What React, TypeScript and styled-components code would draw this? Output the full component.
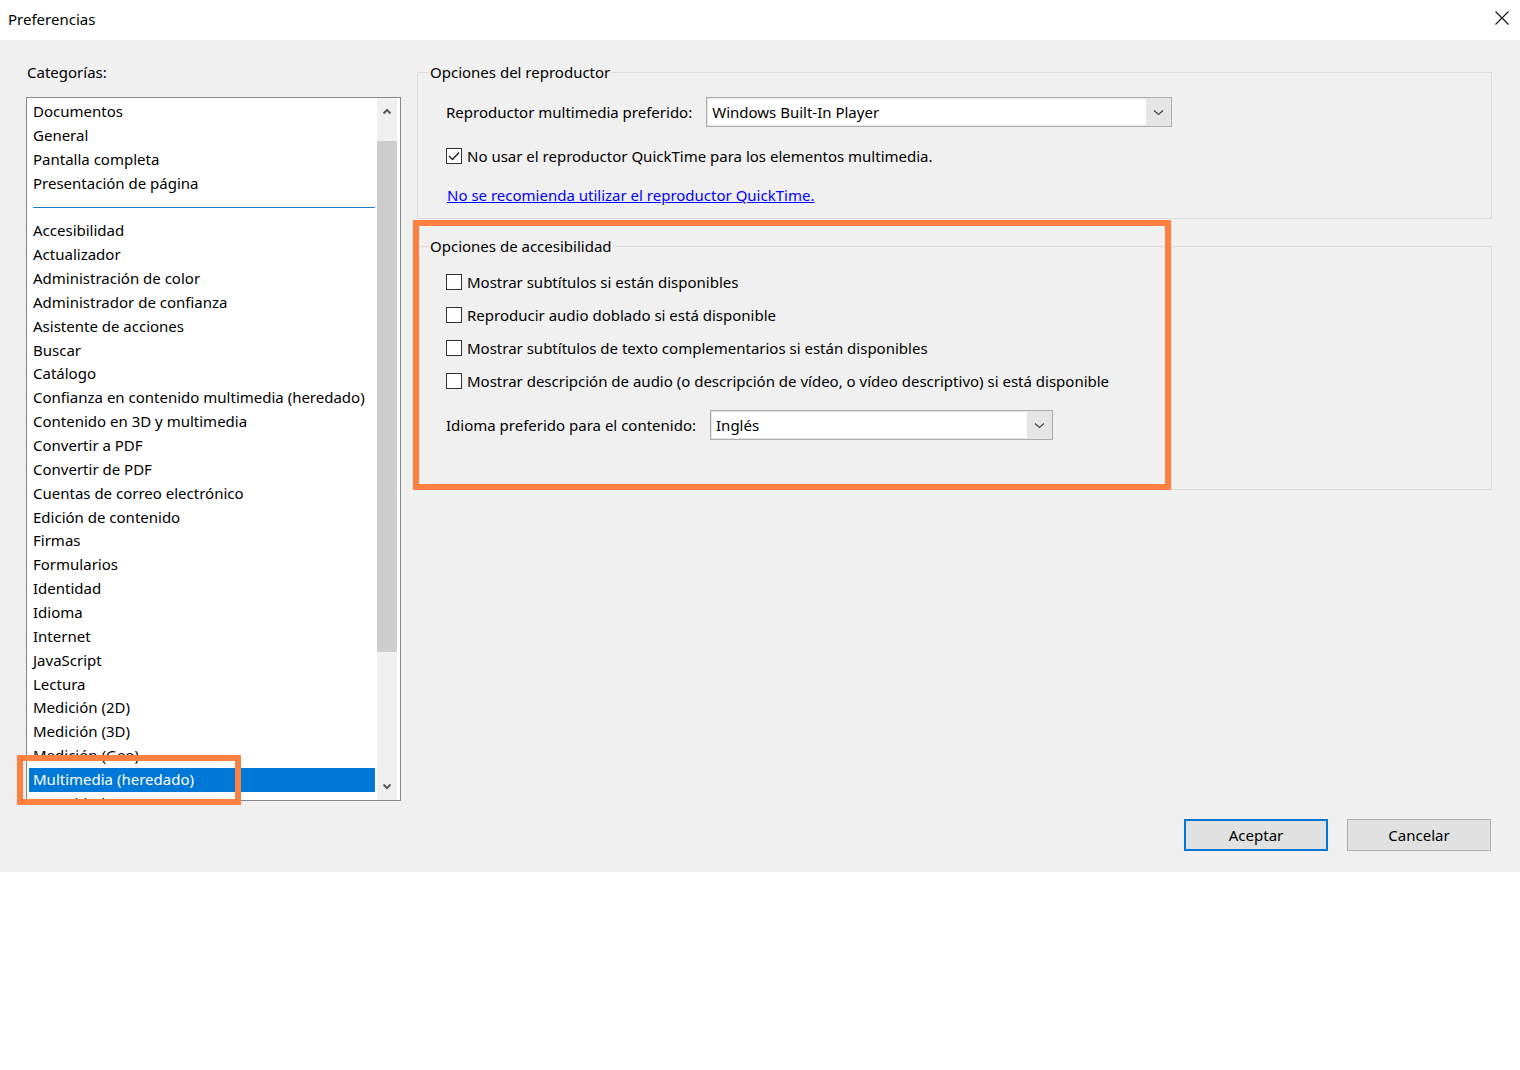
import React from 'react';
import styled, { createGlobalStyle } from 'styled-components';

const GlobalStyle = createGlobalStyle`
  html, body {
    margin: 0;
    padding: 0;
    background: #ffffff;
  }
  body {
    font-family: "Noto Sans", "Open Sans", sans-serif;
    font-size: 15px;
    color: #000000;
  }
`;

const ROW = 23.87;

const Window = styled.div`
  width: 1520px;
`;

const TitleBar = styled.div`
  height: 40px;
  box-sizing: border-box;
  padding: 0 11px 2px 8px;
  display: flex;
  align-items: center;
  justify-content: space-between;
  background: #ffffff;
`;

const Title = styled.span`
  line-height: 20px;
`;

const CloseButton = styled.button`
  border: 0;
  padding: 0;
  background: transparent;
  display: flex;
  margin-top: -2px;
`;

const Body = styled.div`
  height: 832px;
  box-sizing: border-box;
  padding: 22px 28px 21px 26px;
  background: #f0f0f0;
  display: flex;
  flex-direction: column;
`;

const Main = styled.div`
  display: grid;
  grid-template-columns: 375px 1fr;
  column-gap: 16px;
  align-items: start;
`;

const LeftCol = styled.div`
  display: flex;
  flex-direction: column;
`;

const CategoryLabel = styled.div`
  line-height: 20px;
  padding-left: 1px;
  margin-bottom: 15px;
`;

const ListFrame = styled.div`
  position: relative;
  height: 704px;
  box-sizing: border-box;
  border: 1px solid #828790;
  background: #ffffff;
  display: flex;
`;

const ItemsArea = styled.div`
  flex: 1;
  overflow: hidden;
  padding: 2px 2px 0 2px;
`;

const Item = styled.div<{ $selected?: boolean }>`
  height: ${ROW}px;
  line-height: ${ROW}px;
  padding-left: 4px;
  white-space: nowrap;
  background: ${(p) => (p.$selected ? '#0078d7' : 'transparent')};
  color: ${(p) => (p.$selected ? '#ffffff' : '#000000')};
`;

const Separator = styled.div`
  height: ${ROW}px;
  display: flex;
  align-items: center;
  padding-left: 4px;

  &::after {
    content: '';
    flex: 1;
    height: 1px;
    background: #1e7bd0;
  }
`;

const Scrollbar = styled.div`
  width: 20px;
  margin-right: 3px;
  background: #f0f0f0;
  display: flex;
  flex-direction: column;
`;

const ScrollArrow = styled.div<{ $h: number }>`
  height: ${(p) => p.$h}px;
  display: flex;
  align-items: center;
  justify-content: center;
`;

const ScrollTrack = styled.div<{ $offset: number }>`
  flex: 1;
  padding-top: ${(p) => p.$offset}px;
`;

const ScrollThumb = styled.div<{ $h: number }>`
  height: ${(p) => p.$h}px;
  background: #cdcdcd;
`;

const Annotation = styled.div<{ $l: number; $t: number; $w: number; $h: number }>`
  position: absolute;
  left: ${(p) => p.$l}px;
  top: ${(p) => p.$t}px;
  width: ${(p) => p.$w}px;
  height: ${(p) => p.$h}px;
  box-sizing: border-box;
  border: 6px solid #ff8040;
  pointer-events: none;
`;

const RightCol = styled.div`
  position: relative;
  display: flex;
  flex-direction: column;
  gap: 17px;
`;

const GroupBox = styled.fieldset<{ $pb: number }>`
  margin: 0;
  min-width: 0;
  padding: 0 0 ${(p) => p.$pb}px 11px;
  border: 1px solid #dcdcdc;
`;

const Legend = styled.legend`
  padding: 0 1px;
  line-height: 20px;
`;

const Content = styled.div`
  padding-left: 17px;
  display: flex;
  flex-direction: column;
`;

const FieldRow = styled.div<{ $mt: number }>`
  display: flex;
  align-items: center;
  gap: 14px;
  margin-top: ${(p) => p.$mt}px;
`;

const FieldLabel = styled.span`
  white-space: nowrap;
`;

const Select = styled.div<{ $w: number }>`
  width: ${(p) => p.$w}px;
  height: 30px;
  box-sizing: border-box;
  border: 1px solid #adadad;
  padding: 1px;
  background: #e5e5e5;
  display: flex;
`;

const SelectValue = styled.div`
  flex: 1;
  background: #ffffff;
  padding-left: 4px;
  line-height: 26px;
  white-space: nowrap;
`;

const SelectButton = styled.div`
  width: 24px;
  display: flex;
  align-items: center;
  justify-content: center;
`;

const CheckRow = styled.label<{ $mt: number }>`
  display: flex;
  align-items: center;
  height: 20px;
  margin-top: ${(p) => p.$mt}px;
  white-space: nowrap;
`;

const Box = styled.span`
  width: 16px;
  height: 16px;
  box-sizing: border-box;
  border: 1px solid #333333;
  background: #ffffff;
  margin-right: 5px;
  display: flex;
  align-items: center;
  justify-content: center;
`;

const LinkRow = styled.div`
  margin-top: 19px;
  line-height: 20px;
  padding-left: 1px;
`;

const Link = styled.a`
  color: #0000ff;
  text-decoration: underline;
  cursor: pointer;
`;

const Footer = styled.div`
  margin-top: 18px;
  display: flex;
  justify-content: flex-end;
  gap: 19px;
  padding-right: 1px;
`;

const Button = styled.button<{ $primary?: boolean }>`
  width: 144px;
  height: 32px;
  box-sizing: border-box;
  background: #e1e1e1;
  border: ${(p) => (p.$primary ? '2px solid #0078d7' : '1px solid #adadad')};
  font: inherit;
  color: #000000;
  padding: 0;
`;

const categories = [
  'Documentos',
  'General',
  'Pantalla completa',
  'Presentación de página',
  '-',
  'Accesibilidad',
  'Actualizador',
  'Administración de color',
  'Administrador de confianza',
  'Asistente de acciones',
  'Buscar',
  'Catálogo',
  'Confianza en contenido multimedia (heredado)',
  'Contenido en 3D y multimedia',
  'Convertir a PDF',
  'Convertir de PDF',
  'Cuentas de correo electrónico',
  'Edición de contenido',
  'Firmas',
  'Formularios',
  'Identidad',
  'Idioma',
  'Internet',
  'JavaScript',
  'Lectura',
  'Medición (2D)',
  'Medición (3D)',
  'Medición (Geo)',
  'Multimedia (heredado)',
  'Seguridad',
  'Seguridad (mejorada)',
];

const accessibility = [
  'Mostrar subtítulos si están disponibles',
  'Reproducir audio doblado si está disponible',
  'Mostrar subtítulos de texto complementarios si están disponibles',
  'Mostrar descripción de audio (o descripción de vídeo, o vídeo descriptivo) si está disponible',
];

function Chevron({ up }: { up?: boolean }) {
  return (
    <svg width="10" height="7" viewBox="0 0 10 7">
      <path
        d={up ? 'M1.5 5.5 L5 2 L8.5 5.5' : 'M1.5 1.5 L5 5 L8.5 1.5'}
        fill="none"
        stroke="#5a5a5a"
        strokeWidth="2"
      />
    </svg>
  );
}

function DropArrow() {
  return (
    <svg width="11" height="7" viewBox="0 0 11 7">
      <path d="M1 1.5 L5.5 5.5 L10 1.5" fill="none" stroke="#444" strokeWidth="1.2" />
    </svg>
  );
}

function CheckBox({ checked, children, mt }: { checked?: boolean; children: React.ReactNode; mt: number }) {
  return (
    <CheckRow $mt={mt}>
      <Box>
        {checked && (
          <svg width="12" height="10" viewBox="0 0 12 10">
            <path d="M1 5 L4.5 8.5 L11 1.5" fill="none" stroke="#222" strokeWidth="1.4" />
          </svg>
        )}
      </Box>
      {children}
    </CheckRow>
  );
}

export default function App() {
  return (
    <Window>
      <GlobalStyle />
      <TitleBar>
        <Title>Preferencias</Title>
        <CloseButton aria-label="Cerrar">
          <svg width="14" height="14" viewBox="0 0 14 14">
            <path d="M0.5 0.5 L13.5 13.5 M13.5 0.5 L0.5 13.5" stroke="#111" strokeWidth="1.1" />
          </svg>
        </CloseButton>
      </TitleBar>

      <Body>
        <Main>
          <LeftCol>
            <CategoryLabel>Categorías:</CategoryLabel>
            <ListFrame>
              <ItemsArea>
                {categories.map((c, i) =>
                  c === '-' ? (
                    <Separator key={i} />
                  ) : (
                    <Item key={i} $selected={c === 'Multimedia (heredado)'}>
                      {c}
                    </Item>
                  )
                )}
              </ItemsArea>
              <Scrollbar>
                <ScrollArrow $h={27}>
                  <Chevron up />
                </ScrollArrow>
                <ScrollTrack $offset={16}>
                  <ScrollThumb $h={511} />
                </ScrollTrack>
                <ScrollArrow $h={28}>
                  <Chevron />
                </ScrollArrow>
              </Scrollbar>
              <Annotation $l={-10} $t={657} $w={224} $h={50} />
            </ListFrame>
          </LeftCol>

          <RightCol>
            <GroupBox $pb={13}>
              <Legend>Opciones del reproductor</Legend>
              <Content>
                <FieldRow $mt={15}>
                  <FieldLabel>Reproductor multimedia preferido:</FieldLabel>
                  <Select $w={466}>
                    <SelectValue>Windows Built-In Player</SelectValue>
                    <SelectButton>
                      <DropArrow />
                    </SelectButton>
                  </Select>
                </FieldRow>
                <CheckBox checked mt={19}>
                  No usar el reproductor QuickTime para los elementos multimedia.
                </CheckBox>
                <LinkRow>
                  <Link>No se recomienda utilizar el reproductor QuickTime.</Link>
                </LinkRow>
              </Content>
            </GroupBox>

            <GroupBox $pb={49}>
              <Legend>Opciones de accesibilidad</Legend>
              <Content>
                {accessibility.map((a, i) => (
                  <CheckBox key={a} mt={i === 0 ? 16 : 13}>
                    {a}
                  </CheckBox>
                ))}
                <FieldRow $mt={19}>
                  <FieldLabel>Idioma preferido para el contenido:</FieldLabel>
                  <Select $w={343}>
                    <SelectValue>Inglés</SelectValue>
                    <SelectButton>
                      <DropArrow />
                    </SelectButton>
                  </Select>
                </FieldRow>
              </Content>
            </GroupBox>

            <Annotation $l={-4} $t={158} $w={758} $h={270} />
          </RightCol>
        </Main>

        <Footer>
          <Button $primary>Aceptar</Button>
          <Button>Cancelar</Button>
        </Footer>
      </Body>
    </Window>
  );
}
